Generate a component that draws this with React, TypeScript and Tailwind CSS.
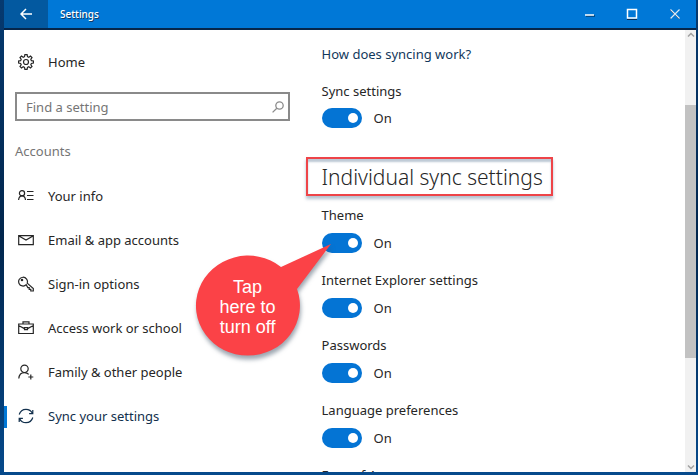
import { useState, type ReactNode } from "react";

type NavItem = {
  label: string;
  icon: ReactNode;
  active?: boolean;
};

const Icon = ({ children }: { children: ReactNode }) => (
  <svg
    viewBox="0 0 16 16"
    className="size-4 shrink-0"
    fill="none"
    stroke="currentColor"
    strokeWidth="1.2"
    aria-hidden="true"
  >
    {children}
  </svg>
);

const navItems: NavItem[] = [
  {
    label: "Your info",
    icon: (
      <Icon>
        <circle cx="4" cy="5.2" r="2.6" />
        <path d="M.6 12C.8 9.400 2 7.800 4 7.800s3.300 1.600 3.500 4.200M9 3.500h6.500M9 7.500h6.500M9 11.500h6.500" />
      </Icon>
    ),
  },
  {
    label: "Email & app accounts",
    icon: (
      <Icon>
        <path d="M.7 3.600h14.600v9H.7zM1 4l7 4 7-4" />
      </Icon>
    ),
  },
  {
    label: "Sign-in options",
    icon: (
      <Icon>
        <path d="M8.200 8.700A4.400 4.400 0 1 1 9.200 7.100L15.300 12.500V15h-2.500v-1.600h-1.600v-1.800H9.800z" />
        <circle cx="4" cy="4" r=".7" />
      </Icon>
    ),
  },
  {
    label: "Access work or school",
    icon: (
      <Icon>
        <path d="M.7 4h14.600v9.500H.7zM5 4V1.800h6V4M1 5.800l5.500 2.800M15 5.800L9.500 8.600M6.500 7.700h3v2h-3z" />
      </Icon>
    ),
  },
  {
    label: "Family & other people",
    icon: (
      <Icon>
        <circle cx="6.500" cy="4.800" r="3.700" />
        <path d="M.8 14.500c.3-3.600 2.500-5.900 5.700-5.900 1.800 0 3.200.6 4.200 1.800M12.800 10.500v5M10.300 13h5" />
      </Icon>
    ),
  },
  {
    label: "Sync your settings",
    active: true,
    icon: (
      <Icon>
        <path d="M1.200 6.500C2.200 3.200 4.800 1.300 8 1.300c2.900 0 5.200 1.500 6.400 4M14.800 2v3.700h-3.700M14.800 9.500c-1 3.300-3.600 5.200-6.800 5.200-2.900 0-5.200-1.500-6.400-4M1.200 14v-3.700h3.700" />
      </Icon>
    ),
  },
];

const GearIcon = () => (
  <Icon>
    <path d="M6.900.7h2.200l.4 2 1.300.6 1.700-1.200 1.500 1.500-1.200 1.700.6 1.300 2 .4v2.100l-2 .4-.6 1.300 1.200 1.700-1.500 1.500-1.700-1.200-1.300.6-.4 2H6.900l-.4-2-1.300-.6L3.500 14 2 12.500l1.200-1.700-.6-1.300-2-.4V7l2-.4.6-1.300L2 3.600l1.500-1.500 1.700 1.200 1.300-.6z" />
    <circle cx="8" cy="8" r="2.500" />
  </Icon>
);

const Toggle = ({ label, id }: { label: string; id: string }) => {
  const [on, setOn] = useState(true);

  return (
    <div className="flex h-5 items-center gap-3">
      <input
        id={id}
        type="checkbox"
        role="switch"
        aria-label={label}
        checked={on}
        onChange={(e) => setOn(e.target.checked)}
        className="flex h-5 w-10 shrink-0 appearance-none items-center rounded-full bg-[#767676] px-1 before:size-[10px] before:rounded-full before:bg-white checked:justify-end checked:bg-[#0474d4]"
      />
      <label htmlFor={id}>{on ? "On" : "Off"}</label>
    </div>
  );
};

const Callout = () => (
  <div className="pointer-events-none absolute top-0 -left-32 h-32 w-36">
    <svg
      viewBox="0 0 144 128"
      className="size-full drop-shadow-[1px_4px_2px_rgba(60,80,100,0.5)]"
      aria-hidden="true"
    >
      <path d="M137 11L87 34A52 50 0 1 0 103 56Z" fill="#fb4247" />
    </svg>
    <p className="absolute top-11 left-0 w-[108px] text-center font-['Liberation_Sans',sans-serif] text-[18px] leading-5 text-white">
      Tap
      <br />
      here to
      <br />
      turn off
    </p>
  </div>
);

const settings = [
  "Theme",
  "Internet Explorer settings",
  "Passwords",
  "Language preferences",
  "Ease of Access",
];

const TitleBar = () => (
  <header className="flex h-[30px] shrink-0 items-stretch border-b-2 border-[#06264a] bg-[#0078d7] text-white">
    <button aria-label="Back" className="grid w-11 place-items-center bg-[#0359a0]">
      <svg viewBox="0 0 12 12" className="size-3" fill="none" stroke="currentColor" strokeWidth="1.500">
        <path d="M12 6H1M6 1L1 6l5 5" />
      </svg>
    </button>
    <h1 className="flex-1 self-center pl-3 text-[10px] leading-4 font-medium [text-shadow:1px_1px_0_#123c66]">
      Settings
    </h1>
    <button aria-label="Minimize" className="grid w-[42px] place-items-center">
      <svg viewBox="0 0 12 12" className="size-3" fill="none">
        <path d="M2 8h9" stroke="#04203d" strokeWidth="1" />
        <path d="M1 7h9" stroke="white" strokeWidth="1.500" />
      </svg>
    </button>
    <button aria-label="Maximize" className="grid w-[42px] place-items-center">
      <svg viewBox="0 0 12 12" className="size-3" fill="none">
        <path d="M1 11.500h10" stroke="#04305c" />
        <path d="M1.500 1.500h9v8.500h-9z" stroke="white" strokeWidth="1.500" />
      </svg>
    </button>
    <button aria-label="Close" className="grid w-[43px] place-items-center">
      <svg viewBox="0 0 12 12" className="size-3" fill="none">
        <path d="M1 2l9 9M10 2l-9 9" stroke="#04305c" />
        <path d="M1.500 1.500l9 9M10.500 1.500l-9 9" stroke="#dce8f4" strokeWidth="1.200" />
      </svg>
    </button>
  </header>
);

const App = () => (
  <div className="flex h-screen bg-gradient-to-b from-[#063a70] via-[#02264d] to-[#064a8c] pr-[2px] pb-[3px] pl-1 font-['Noto_Sans',sans-serif] text-[13px] leading-5 text-[#262626]">
    <div className="flex min-w-0 flex-1 flex-col">
      <TitleBar />

      <div className="flex min-h-0 flex-1 overflow-hidden bg-white">
        {/* Sidebar */}
        <nav className="w-[43%] shrink-0 pt-[10px]">
          <a href="#home" className="flex h-11 items-center gap-[14px] pl-[14px]">
            <GearIcon />
            Home
          </a>
          <div className="mt-2 mr-3 ml-[11px] flex h-[29px] items-center border-2 border-[#8a8a8a] pr-1 pl-[9px]">
            <input
              type="search"
              aria-label="Find a setting"
              placeholder="Find a setting"
              className="min-w-0 flex-1 outline-none placeholder:text-[#757575]"
            />
            <svg viewBox="0 0 12 12" className="size-3" fill="none" stroke="#8c8c8c" strokeWidth="1.300">
              <circle cx="7.500" cy="4.500" r="3.700" />
              <path d="M4.800 7.200L.6 11.400" />
            </svg>
          </div>
          <h2 className="mt-5 pl-[11px] text-[#757575]">Accounts</h2>
          <ul className="mt-[13px]">
            {navItems.map((item) => (
              <li key={item.label} className="relative">
                {item.active && (
                  <span className="absolute top-3 left-0 h-[22px] w-[3px] bg-[#0078d7]" />
                )}
                <a
                  href="#settings"
                  className={
                    item.active
                      ? "flex h-11 items-center gap-[14px] pl-[14px] text-[#12304d]"
                      : "flex h-11 items-center gap-[14px] pl-[14px]"
                  }
                >
                  {item.icon}
                  {item.label}
                </a>
              </li>
            ))}
          </ul>
        </nav>

        {/* Sync settings */}
        <main className="min-w-0 flex-1 pt-[14px] pl-5">
          <a href="#help" className="block text-[#12385c]">
            How does syncing work?
          </a>
          <p className="mt-[17px] mb-[7px]">Sync settings</p>
          <Toggle id="sync" label="Sync settings" />

          <h2 className="mt-[29px] -ml-4 flex h-[39px] w-fit items-center border-2 border-[#ee4448] pr-2 pl-[14px] text-[21px] font-light shadow-[0_3px_3px_rgba(90,120,150,0.45),inset_0_3px_2px_rgba(90,120,150,0.4)]">
            Individual sync settings
          </h2>

          <div className="mt-[9px] space-y-[17px]">
            {settings.map((name, i) => (
              <section key={name} className="relative">
                <h3 className="mb-2">{name}</h3>
                <Toggle id={`setting-${i}`} label={name} />
                {i === 0 && (
                  <div className="absolute top-7 left-0">
                    <Callout />
                  </div>
                )}
              </section>
            ))}
          </div>
        </main>

        {/* Scrollbar */}
        <div className="flex w-[11px] shrink-0 flex-col items-center bg-[#f1f1f1] text-[#a0a0a0]" aria-hidden="true">
          <svg viewBox="0 0 8 8" className="my-px size-2" fill="none" stroke="currentColor" strokeWidth="1.500">
            <path d="M1 5.500l3-3 3 3" />
          </svg>
          <div className="w-full flex-1 pt-[65px]">
            <div className="h-[71%] bg-[#c2c2c2]" />
          </div>
          <svg viewBox="0 0 8 8" className="my-px size-2" fill="none" stroke="currentColor" strokeWidth="1.500">
            <path d="M1 2.500l3 3 3-3" />
          </svg>
        </div>
      </div>
    </div>
  </div>
);

export default App;
